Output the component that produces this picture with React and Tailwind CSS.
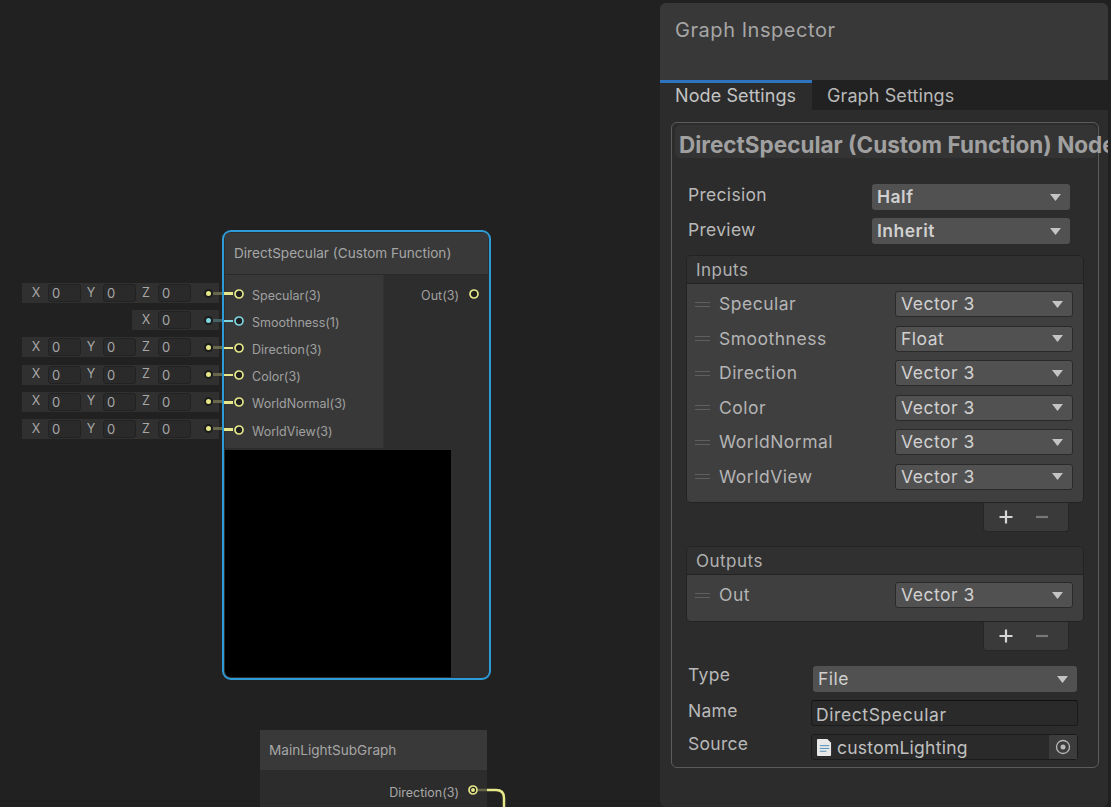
import React from "react";

const FONT = "font-['Inter','Noto_Sans',sans-serif]";

const YELLOW = "#e6e88a";
const CYAN = "#7fd6e0";

const PORTS = [
  { name: "Specular(3)", axes: ["X", "Y", "Z"] },
  { name: "Smoothness(1)", axes: ["X"], cyan: true },
  { name: "Direction(3)", axes: ["X", "Y", "Z"] },
  { name: "Color(3)", axes: ["X", "Y", "Z"] },
  { name: "WorldNormal(3)", axes: ["X", "Y", "Z"] },
  { name: "WorldView(3)", axes: ["X", "Y", "Z"] },
];

const INPUTS = [
  ["Specular", "Vector 3"],
  ["Smoothness", "Float"],
  ["Direction", "Vector 3"],
  ["Color", "Vector 3"],
  ["WorldNormal", "Vector 3"],
  ["WorldView", "Vector 3"],
];

function Arrow() {
  return (
    <svg width="11" height="7" viewBox="0 0 11 7" className="shrink-0">
      <path d="M0 0h11L5.500 7z" fill="#c4c4c4" />
    </svg>
  );
}

function Port({ color, filled }) {
  return (
    <svg width="12" height="12" viewBox="0 0 12 12" className="shrink-0">
      <circle cx="6" cy="6" r="4" fill="#1f1f1f" stroke={color} strokeWidth="1.700" />
      {filled && <circle cx="6" cy="6" r="2" fill={color} />}
    </svg>
  );
}

function InlineEditor({ axes, cyan }) {
  const color = cyan ? CYAN : YELLOW;
  return (
    <div className="flex h-[20px] items-center justify-end">
      <div className="flex h-[20px] items-center bg-[#303030] pl-[5px] text-[12.500px] text-[#a8a8a8]">
        {axes.map((axis) => (
          <div key={axis} className="flex items-center">
            <span className="w-[18px] text-center">{axis}</span>
            <div className="ml-[3px] mr-[1px] h-[18px] w-[33px] rounded-[3px] border border-[#222] bg-[#2a2a2a] pl-[3px] text-[13px] leading-[17px] text-[#a8a8a8]">
              0
            </div>
          </div>
        ))}
        <div className="ml-[12px] flex w-[15px] items-center">
          <span className="h-[9px] w-[9px] shrink-0 rounded-full border-[2.500px] border-[#1c1c1c]" style={{ backgroundColor: color }} />
          <span className="h-[3px] w-[6px]" style={{ backgroundColor: color, opacity: 0.3 }} />
        </div>
      </div>
      <div className="h-[3px] w-[3px]" style={{ backgroundColor: color, opacity: 0.35 }} />
    </div>
  );
}

function DirectSpecularNode() {
  return (
    <div className="absolute left-[222px] top-[230px] flex h-[450px] w-[269px] flex-col overflow-hidden rounded-[9px] border-2 border-[#2f9bd6] bg-[#2d2d2d] p-px">
      <div className="flex h-[42px] shrink-0 items-center border-b border-[#2a2a2a] bg-[#393939] pl-[9px] text-[13.600px] text-[#a6a6a6]">
        DirectSpecular (Custom Function)
      </div>
      <div className="flex h-[173px] shrink-0">
        <div className="flex w-[158px] flex-col bg-[#383838] pt-[5px]">
          {PORTS.map((port) => (
            <div key={port.name} className="flex h-[27.200px] items-center">
              <div className="ml-[-1px] h-[2.500px] w-[9px]" style={{ backgroundColor: port.cyan ? CYAN : YELLOW }} />
              <Port color={port.cyan ? CYAN : YELLOW} />
              <span className="ml-[7px] mt-[5px] text-[12.500px] text-[#a0a0a0]">{port.name}</span>
            </div>
          ))}
        </div>
        <div className="flex flex-1 justify-end border-l border-[#333] pr-[8px] pt-[5px]">
          <div className="flex h-[27.200px] items-center">
            <span className="mr-[9px] mt-[5px] text-[12.500px] text-[#a0a0a0]">Out(3)</span>
            <Port color={YELLOW} />
          </div>
        </div>
      </div>
      <div className="mt-[2px] flex-1">
        <div className="h-full w-[226px] rounded-bl-[6px] bg-black" />
      </div>
    </div>
  );
}

function MainLightNode() {
  return (
    <div className="absolute left-[260px] top-[730px] h-[77px] w-[227px] bg-[#2c2c2c]">
      <div className="flex h-[40px] items-center bg-[#393939] pl-[9px] text-[13.600px] text-[#a6a6a6]">MainLightSubGraph</div>
      <div className="flex h-[37px] items-start justify-end pr-[8px] pt-[14px]">
        <span className="mr-[8px] mt-[1px] text-[12.500px] leading-[15px] text-[#a8a8a8]">Direction(3)</span>
        <Port color={YELLOW} filled />
      </div>
    </div>
  );
}

function Dropdown({ value, bordered, bold, className }) {
  return (
    <div
      className={`flex items-center justify-between rounded-[3px] bg-[#515151] pl-[5px] pr-[9px] text-[#d0d0d0] ${
        bordered ? "border border-[#2a2a2a]" : ""
      } ${bold ? "font-semibold" : ""} ${className}`}
    >
      <span className="text-[17.500px] tracking-[0.500px]">{value}</span>
      <Arrow />
    </div>
  );
}

function ParamRow({ name, type }) {
  return (
    <div className="flex h-[34.500px] items-center pl-[8px] pr-[10px]">
      <div className="flex w-[15px] flex-col gap-[3px]">
        <div className="h-px bg-[#5f5f5f]" />
        <div className="h-px bg-[#5f5f5f]" />
      </div>
      <span className="ml-[9px] flex-1 text-[17.500px] tracking-[0.500px] text-[#b4b4b4]">{name}</span>
      <Dropdown value={type} bordered className="h-[26px] w-[178px]" />
    </div>
  );
}

function AddRemove() {
  return (
    <div className="ml-[297px] flex h-[29px] w-[86px] items-center rounded-b-[4px] border border-t-0 border-[#262626] bg-[#3a3a3a] pl-[14px]">
      <svg width="16" height="16" viewBox="0 0 16 16">
        <path d="M8 1.500v13M1.500 8h13" stroke="#d6d6d6" strokeWidth="2.200" />
      </svg>
      <svg width="14" height="16" viewBox="0 0 14 16" className="ml-[21px]">
        <path d="M1 8h12" stroke="#777" strokeWidth="2.200" />
      </svg>
    </div>
  );
}

function ParamList({ title, rows, bodyClass }) {
  return (
    <div className="overflow-hidden rounded-[5px] border border-[#232323]">
      <div className="flex h-[28px] items-center border-b border-[#232323] bg-[#303030] pl-[9px] pt-[2px] text-[17px] tracking-[0.500px] text-[#b0b0b0]">
        {title}
      </div>
      <div className={`bg-[#3f3f3f] pt-[3px] ${bodyClass}`}>
        {rows.map(([name, type]) => (
          <ParamRow key={name} name={name} type={type} />
        ))}
      </div>
    </div>
  );
}

function Inspector() {
  return (
    <div className="absolute bottom-0 left-[660px] top-[3px] flex w-[448px] flex-col overflow-hidden rounded-[6px] bg-[#2c2c2c]">
      <div className="h-[77px] shrink-0 bg-[#383838] pl-[15px] pt-[12px] text-[20px] tracking-[0.550px] text-[#a6a6a6]">
        Graph Inspector
      </div>
      <div className="flex h-[30px] shrink-0 bg-[#212121] text-[18px] tracking-[0.100px]">
        <div className="w-[152px] border-t-[3px] border-[#2f74c0] bg-[#2c2c2c] pl-[15px] leading-[26px] text-[#c4c4c4]">Node Settings</div>
        <div className="pl-[15px] pt-[3px] leading-[26px] text-[#b8b8b8]">Graph Settings</div>
      </div>
      <div className="ml-[11px] mt-[12px] h-[646px] w-[428px] rounded-[6px] border border-[#5c5c5c] p-[2px]">
        <div className="ml-px h-[33px] w-[422px] rounded-[5px] bg-[#343434] pl-[4px] text-[22.500px] font-bold leading-[40px] whitespace-nowrap text-[#a0a0a0]">
          DirectSpecular (Custom Function) Node
        </div>
        <div className="mt-[26px] flex h-[26px] items-center pl-[14px] pr-[26px]">
          <span className="mb-[4px] flex-1 text-[17.500px] tracking-[0.300px] text-[#b8b8b8]">Precision</span>
          <Dropdown value="Half" bold className="h-[26px] w-[198px]" />
        </div>
        <div className="mt-[8px] flex h-[26px] items-center pl-[14px] pr-[26px]">
          <span className="mb-[2px] flex-1 text-[17.500px] tracking-[0.300px] text-[#b8b8b8]">Preview</span>
          <Dropdown value="Inherit" bold className="h-[26px] w-[198px]" />
        </div>
        <div className="ml-[12px] mt-[11px] w-[398px]">
          <ParamList title="Inputs" rows={INPUTS} bodyClass="h-[218px]" />
          <AddRemove />
        </div>
        <div className="ml-[12px] mt-[14px] w-[398px]">
          <ParamList title="Outputs" rows={[["Out", "Vector 3"]]} bodyClass="h-[46px]" />
          <AddRemove />
        </div>
        <div className="mt-[15px] flex h-[26px] items-center pl-[14px] pr-[19px]">
          <span className="mb-[8px] flex-1 text-[17.500px] tracking-[0.300px] text-[#b8b8b8]">Type</span>
          <Dropdown value="File" className="h-[26px] w-[264px]" />
        </div>
        <div className="mt-[8px] flex h-[26px] items-center pl-[14px] pr-[18px]">
          <span className="mb-[4px] flex-1 text-[17.500px] tracking-[0.300px] text-[#b8b8b8]">Name</span>
          <div className="flex h-[26px] w-[267px] items-center rounded-[3px] border border-[#1b1b1b] border-t-[#111] bg-[#2a2a2a] pl-[4px] pt-[4px] text-[17.500px] tracking-[0.600px] text-[#c0c0c0]">
            DirectSpecular
          </div>
        </div>
        <div className="mt-[8px] flex h-[26px] items-center pl-[14px] pr-[18px]">
          <span className="mb-[6px] flex-1 text-[17.500px] tracking-[0.300px] text-[#b8b8b8]">Source</span>
          <div className="flex h-[26px] w-[267px] items-center rounded-[3px] border border-[#1b1b1b] bg-[#2a2a2a] pl-[5px] text-[#c0c0c0]">
            <svg width="15" height="17" viewBox="0 0 16 18" className="shrink-0">
              <path d="M1 0h10l4 4v13a1 1 0 0 1-1 1H1a1 1 0 0 1-1-1V1a1 1 0 0 1 1-1z" fill="#e8e8e8" />
              <path d="M3 7h10M3 10h10M3 13h7" stroke="#4a8ab8" strokeWidth="1" />
            </svg>
            <span className="ml-[5px] flex-1 pt-[2px] text-[17.500px] tracking-[0.250px]">customLighting</span>
            <div className="flex h-[24px] w-[28px] items-center justify-center bg-[#3c3c3c]">
              <svg width="16" height="16" viewBox="0 0 16 16">
                <circle cx="8" cy="8" r="6.500" fill="none" stroke="#b8b8b8" strokeWidth="1.300" />
                <circle cx="8" cy="8" r="2.500" fill="#b8b8b8" />
              </svg>
            </div>
          </div>
        </div>
      </div>
    </div>
  );
}

export default function App() {
  return (
    <div className={`relative h-[807px] w-[1111px] overflow-hidden bg-[#212121] ${FONT}`}>
      <div className="absolute left-[22px] top-[283px] flex w-[200px] flex-col items-end">
        {PORTS.map((port) => (
          <div key={port.name} className="flex h-[27.200px] items-start">
            <InlineEditor axes={port.axes} cyan={port.cyan} />
          </div>
        ))}
      </div>
      <DirectSpecularNode />
      <MainLightNode />
      <svg width="40" height="30" viewBox="0 0 40 30" className="absolute left-[478px] top-[782px]">
        <path d="M0 8h9" stroke={YELLOW} strokeWidth="2.500" opacity="0.3" />
        <path d="M9 8h9q8 0 8 8v14" fill="none" stroke={YELLOW} strokeWidth="2.500" />
      </svg>
      <Inspector />
    </div>
  );
}
